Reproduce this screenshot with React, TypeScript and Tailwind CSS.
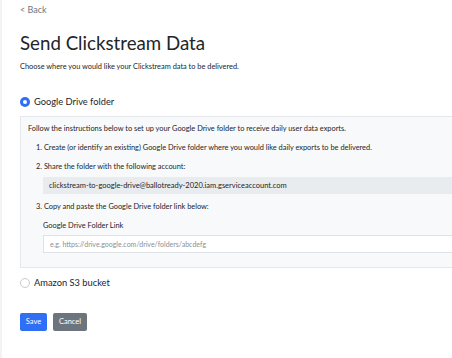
export default function App() {
  return (
    <div className="min-h-[358px] w-[452px] overflow-hidden bg-white border-l-2 border-[#f3f3f3] pl-[18px] font-['Lato','Noto_Sans',sans-serif] text-[#212529]">
      <div className="mt-[4px] h-[12px] text-[9px] leading-[12px] text-[#6c757d]">&lt; Back</div>
      <h1 className="mt-[15px] h-[24px] text-[18.7px] leading-[24px] font-normal">Send Clickstream Data</h1>
      <p className="mt-[7px] h-[10px] text-[7.4px] leading-[10px]">Choose where you would like your Clickstream data to be delivered.</p>

      <div className="mt-[23px] flex h-[14px] items-center gap-[4px]">
        <span className="flex h-[10px] w-[10px] items-center justify-center rounded-full bg-[#2f6ff6]">
          <span className="h-[4px] w-[4px] rounded-full bg-white" />
        </span>
        <span className="text-[9.3px] leading-[14px]">Google Drive folder</span>
      </div>

      <div className="mt-[7px] w-[460px] border border-[#e5e7ea] bg-[#f8f9fa] pl-[7px] pt-[7px] pb-[14px]">
        <p className="h-[10px] text-[7.4px] leading-[10px]">Follow the instructions below to set up your Google Drive folder to receive daily user data exports.</p>
        <div className="pl-[8px]">
          <p className="mt-[9px] h-[10px] text-[7.4px] leading-[10px]">1. Create (or identify an existing) Google Drive folder where you would like daily exports to be delivered.</p>
          <p className="mt-[9px] h-[10px] text-[7.4px] leading-[10px]">2. Share the folder with the following account:</p>
          <div className="ml-[7px] mt-[5px] flex h-[17px] items-center bg-[#e9ecef] pl-[6px] text-[7.5px]">clickstream-to-google-drive@ballotready-2020.iam.gserviceaccount.com</div>
          <p className="mt-[8px] h-[10px] text-[7.4px] leading-[10px]">3. Copy and paste the Google Drive folder link below:</p>
          <p className="ml-[7px] mt-[9px] h-[10px] text-[7.4px] leading-[10px]">Google Drive Folder Link</p>
          <div className="ml-[7px] mt-[4px] flex h-[18px] items-center border border-[#dee2e6] bg-white pl-[6px] text-[7px] text-[#8a9096]">e.g. https://drive.google.com/drive/folders/abcdefg</div>
        </div>
      </div>

      <div className="mt-[8px] flex h-[14px] items-center gap-[4px]">
        <span className="h-[10px] w-[10px] rounded-full border border-[#c6cbd0] bg-white" />
        <span className="text-[9.3px] leading-[14px]">Amazon S3 bucket</span>
      </div>

      <div className="mt-[23px] flex gap-[6px]">
        <button className="flex h-[18px] w-[27px] items-center justify-center rounded-[2px] bg-[#2f6ff6] text-[7.5px] text-white">Save</button>
        <button className="flex h-[18px] w-[34px] items-center justify-center rounded-[2px] bg-[#6c757d] text-[7.5px] text-white">Cancel</button>
      </div>
    </div>
  );
}
